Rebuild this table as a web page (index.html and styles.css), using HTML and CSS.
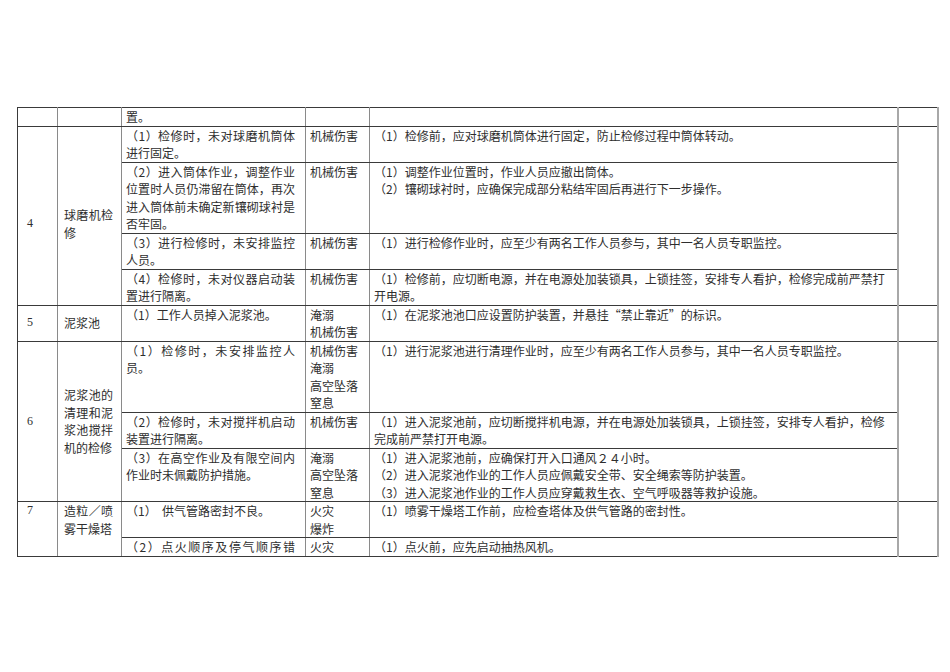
FILE: index.html
```html
<!DOCTYPE html>
<html lang="zh-CN">
<head>
<meta charset="utf-8">
<title>检修安全措施表</title>
<link rel="stylesheet" href="styles.css">
</head>
<body>
<div class="page">
<table class="grid">
  <colgroup>
    <col class="w-no"><col class="w-name"><col class="w-risk"><col class="w-type"><col class="w-measure"><col class="w-note">
  </colgroup>
  <tr>
    <td class="c-no"></td>
    <td class="c-name"></td>
    <td class="c-risk">置。</td>
    <td class="c-type"></td>
    <td class="c-measure"></td>
    <td class="c-note"></td>
  </tr>
  <tr>
    <td class="c-no mid lift" rowspan="4">4</td>
    <td class="c-name mid lift" rowspan="4">球磨机检修</td>
    <td class="c-risk">（1）检修时，未对球磨机筒体进行固定。</td>
    <td class="c-type">机械伤害</td>
    <td class="c-measure">（1）检修前，应对球磨机筒体进行固定，防止检修过程中筒体转动。</td>
    <td class="c-note" rowspan="4"></td>
  </tr>
  <tr>
    <td class="c-risk">（2）进入筒体作业，调整作业位置时人员仍滞留在筒体，再次进入筒体前未确定新镶砌球衬是否牢固。</td>
    <td class="c-type">机械伤害</td>
    <td class="c-measure"><p>（1）调整作业位置时，作业人员应撤出筒体。</p><p>（2）镶砌球衬时，应确保完成部分粘结牢固后再进行下一步操作。</p></td>
  </tr>
  <tr>
    <td class="c-risk">（3）进行检修时，未安排监控人员。</td>
    <td class="c-type">机械伤害</td>
    <td class="c-measure">（1）进行检修作业时，应至少有两名工作人员参与，其中一名人员专职监控。</td>
  </tr>
  <tr>
    <td class="c-risk">（4）检修时，未对仪器启动装置进行隔离。</td>
    <td class="c-type">机械伤害</td>
    <td class="c-measure">（1）检修前，应切断电源，并在电源处加装锁具，上锁挂签，安排专人看护，检修完成前严禁打开电源。</td>
  </tr>
  <tr>
    <td class="c-no mid">5</td>
    <td class="c-name mid">泥浆池</td>
    <td class="c-risk">（1）工作人员掉入泥浆池。</td>
    <td class="c-type"><p>淹溺</p><p>机械伤害</p></td>
    <td class="c-measure">（1）在泥浆池池口应设置防护装置，并悬挂“禁止靠近”的标识。</td>
    <td class="c-note"></td>
  </tr>
  <tr>
    <td class="c-no mid" rowspan="3">6</td>
    <td class="c-name mid" rowspan="3">泥浆池的清理和泥浆池搅拌机的检修</td>
    <td class="c-risk">（1）检修时，未安排监控人员。</td>
    <td class="c-type"><p>机械伤害</p><p>淹溺</p><p>高空坠落</p><p>窒息</p></td>
    <td class="c-measure">（1）进行泥浆池进行清理作业时，应至少有两名工作人员参与，其中一名人员专职监控。</td>
    <td class="c-note" rowspan="3"></td>
  </tr>
  <tr>
    <td class="c-risk">（2）检修时，未对搅拌机启动装置进行隔离。</td>
    <td class="c-type">机械伤害</td>
    <td class="c-measure">（1）进入泥浆池前，应切断搅拌机电源，并在电源处加装锁具，上锁挂签，安排专人看护，检修完成前严禁打开电源。</td>
  </tr>
  <tr>
    <td class="c-risk">（3）在高空作业及有限空间内作业时未佩戴防护措施。</td>
    <td class="c-type"><p>淹溺</p><p>高空坠落</p><p>窒息</p></td>
    <td class="c-measure"><p>（1）进入泥浆池前，应确保打开入口通风２４小时。</p><p>（2）进入泥浆池作业的工作人员应佩戴安全带、安全绳索等防护装置。</p><p>（3）进入泥浆池作业的工作人员应穿戴救生衣、空气呼吸器等救护设施。</p></td>
  </tr>
  <tr>
    <td class="c-no" rowspan="2">7</td>
    <td class="c-name" rowspan="2">造粒／喷雾干燥塔</td>
    <td class="c-risk">（1）&nbsp;&nbsp;供气管路密封不良。</td>
    <td class="c-type"><p>火灾</p><p>爆炸</p></td>
    <td class="c-measure">（1）喷雾干燥塔工作前，应检查塔体及供气管路的密封性。</td>
    <td class="c-note" rowspan="2"></td>
  </tr>
  <tr>
    <td class="c-risk spread">（2）点火顺序及停气顺序错</td>
    <td class="c-type">火灾</td>
    <td class="c-measure">（1）点火前，应先启动抽热风机。</td>
  </tr>
</table>
</div>
</body>
</html>
```

FILE: styles.css
```css
html, body {
  margin: 0;
  background: #ffffff;
}

body {
  font-family: "Noto Sans CJK SC", "Liberation Serif", sans-serif;
  font-size: 12px;
  color: #2e2e2e;
}

.page {
  padding: 107px 0 0 17px;
}

.grid {
  border-collapse: collapse;
  table-layout: fixed;
  width: 920px;
}

.w-no { width: 40px; }
.w-name { width: 64px; }
.w-risk { width: 184px; }
.w-type { width: 64px; }
.w-measure { width: 528px; }
.w-note { width: 40px; }

.grid td {
  border-top: 1px solid #3a3a3a;
  border-bottom: 1px solid #3a3a3a;
  border-left: 1px solid #8a8a8a;
  border-right: 1px solid #8a8a8a;
  padding: 0 4px;
  line-height: 17.5px;
  vertical-align: top;
}

.grid td p {
  margin: 0;
}

.grid .c-no {
  font-family: "Liberation Serif", serif;
  border-left: 1px solid #3a3a3a;
  padding-left: 9px;
}

.grid .c-name {
  padding-left: 6px;
  padding-right: 8px;
  text-align: justify;
}

.grid .c-risk {
  padding-left: 4px;
  padding-right: 10px;
  text-align: justify;
}

.grid .c-measure {
  padding-left: 4px;
  padding-right: 10px;
  border-right: 2px solid #a8a8a8;
}

.grid .c-note {
  border-right: 2px solid #a8a8a8;
}

.grid .mid {
  vertical-align: middle;
}

.grid .lift {
  padding-top: 16px;
}

.grid .spread {
  text-align-last: justify;
}
```
